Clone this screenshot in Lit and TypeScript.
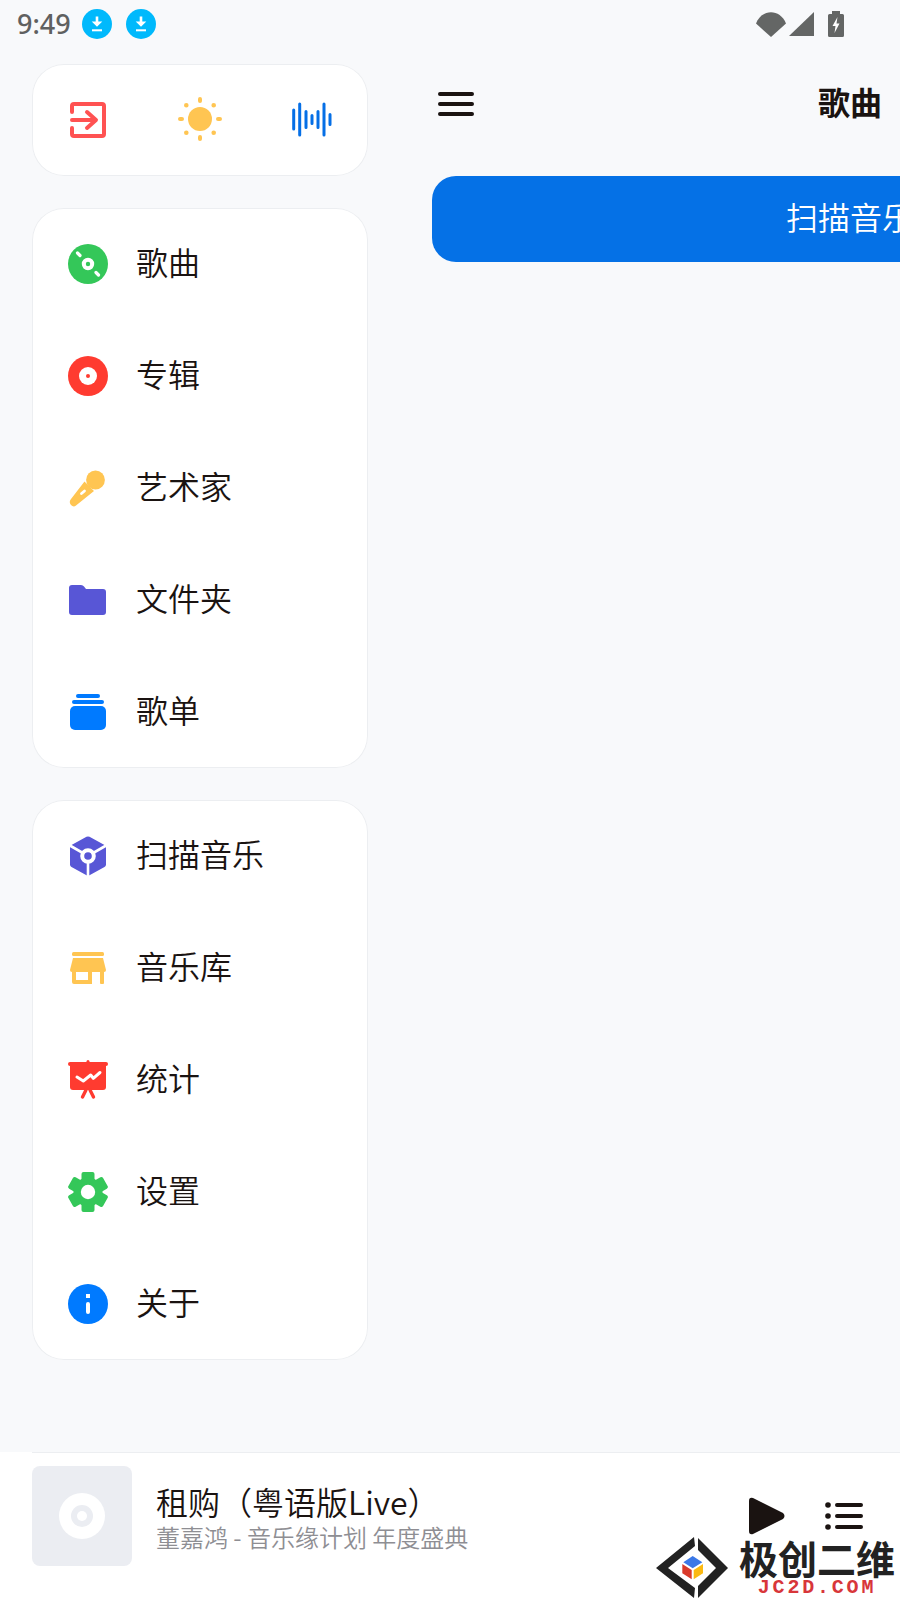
import { html, svg, css, LitElement } from "lit"
import { customElement } from "lit/decorators.js"

const GREEN = "#34c759"
const RED = "#ff3b30"
const YELLOW = "#ffc552"
const INDIGO = "#5856d6"
const BLUE = "#007aff"

const icon40 = (body) => html`<svg class="menu-icon" viewBox="0 0 40 40">${body}</svg>`

const topMenu = [
  {
    label: "歌曲",
    icon: icon40(svg`
      <circle cx="20" cy="20" r="20" fill=${GREEN} />
      <circle cx="20" cy="20" r="4.2" fill=${GREEN} stroke="#fff" stroke-width="4" />
      <path d="M9.5 9 L12 11.5 M28 28.5 L30.5 31" stroke="#fff" stroke-width="3.2" stroke-linecap="round" />
    `),
  },
  {
    label: "专辑",
    icon: icon40(svg`
      <circle cx="20" cy="20" r="20" fill=${RED} />
      <circle cx="20" cy="20" r="9" fill="#fff" />
      <circle cx="20" cy="20" r="2" fill=${RED} />
    `),
  },
  {
    label: "艺术家",
    icon: icon40(svg`
      <circle cx="27.5" cy="12" r="9.4" fill=${YELLOW} />
      <path d="M16.5 13.5 L26 23 L8 37.5 Q5.5 39.5 3 37 Q0.5 34 3 31 Z" fill=${YELLOW} />
      <path d="M13.5 25.5 L16.5 23" stroke="#fff" stroke-width="2.8" stroke-linecap="round" />
    `),
  },
  {
    label: "文件夹",
    icon: icon40(svg`
      <path d="M1 8 Q1 5 4 5 H13 Q15 5 16 6.5 L18 9 H35 Q38 9 38 12 V32 Q38 35 35 35 H4 Q1 35 1 32 Z" fill=${INDIGO} />
    `),
  },
  {
    label: "歌单",
    icon: icon40(svg`
      <rect x="8" y="2" width="24" height="4" rx="2" fill=${BLUE} />
      <rect x="4" y="8" width="32" height="4" rx="2" fill=${BLUE} />
      <rect x="2" y="14" width="36" height="24" rx="5" fill=${BLUE} />
    `),
  },
]

const toolMenu = [
  {
    label: "扫描音乐",
    icon: icon40(svg`
      <path d="M18.5 0.8 Q20 0 21.5 0.8 L36.5 9 Q38 9.8 38 11.5 V28.5 Q38 30.2 36.5 31 L21.5 39.2 Q20 40 18.5 39.2 L3.5 31 Q2 30.2 2 28.5 V11.5 Q2 9.8 3.5 9 Z" fill=${INDIGO} />
      <path d="M1 9 L20 20 L39 9 M20 20 V41" stroke="#fff" stroke-width="2.6" fill="none" />
      <circle cx="20" cy="20" r="5.8" fill=${INDIGO} stroke="#fff" stroke-width="4" />
    `),
  },
  {
    label: "音乐库",
    icon: icon40(svg`
      <rect x="4" y="4" width="32" height="4" rx="1.5" fill=${YELLOW} />
      <path d="M5 10 H35 L38 22 Q38 24 36 24 H4 Q2 24 2 22 Z" fill=${YELLOW} />
      <path fill-rule="evenodd" d="M4 23 H24 V36 H6 Q4 36 4 34 Z M8 24 V32 H20 V24 Z" fill=${YELLOW} />
      <path d="M32 23 H36 V35 Q36 36 35 36 H33 Q32 36 32 35 Z" fill=${YELLOW} />
    `),
  },
  {
    label: "统计",
    icon: icon40(svg`
      <rect x="18.5" y="0" width="3" height="4" rx="1.5" fill=${RED} />
      <rect x="0" y="2" width="40" height="4" rx="2" fill=${RED} />
      <path d="M2 4 H38 V27 Q38 30 35 30 H5 Q2 30 2 27 Z" fill=${RED} />
      <path d="M9 17 L15.3 21 L22.7 15 L25.3 18.3 L32 12.5" fill="none" stroke="#fff" stroke-width="3" stroke-linecap="round" stroke-linejoin="round" />
      <path d="M18 30 L14.5 37 M22 30 L25.5 37" stroke=${RED} stroke-width="3.4" stroke-linecap="round" />
    `),
  },
  {
    label: "设置",
    icon: icon40(svg`
      <g fill=${GREEN}>
        <rect x="13.5" y="0" width="13" height="40" rx="2" />
        <rect x="13.5" y="0" width="13" height="40" rx="2" transform="rotate(60 20 20)" />
        <rect x="13.5" y="0" width="13" height="40" rx="2" transform="rotate(120 20 20)" />
        <circle cx="20" cy="20" r="14.5" />
      </g>
      <circle cx="20" cy="20" r="7.2" fill="#fff" />
    `),
  },
  {
    label: "关于",
    icon: icon40(svg`
      <circle cx="20" cy="20" r="20" fill=${BLUE} />
      <rect x="18" y="10" width="4" height="4" fill="#fff" />
      <rect x="18" y="18" width="4" height="12" rx="2" fill="#fff" />
    `),
  },
]

const downloadBadge = html`
  <svg class="badge" viewBox="0 0 30 30">
    <circle cx="15" cy="15" r="15" fill="#00b9fc" />
    <path d="M13.7 7.5 H16.3 V12.5 H20.3 L15 17.8 L9.7 12.5 H13.7 Z" fill="#fff" />
    <rect x="10" y="20.3" width="10" height="2" fill="#fff" />
  </svg>
`

@customElement("app-root")
export default class AppRoot extends LitElement {
  static styles = css`
    :host {
      display: flex;
      flex-direction: column;
      position: relative;
      width: 900px;
      height: 1600px;
      overflow: hidden;
      background: #f8f9fb;
      font-family: "Noto Sans CJK SC", "Noto Sans", sans-serif;
      color: #1a1311;
    }

    .status {
      display: flex;
      align-items: center;
      height: 48px;
      padding: 0 56px 0 17px;
      color: #5f6060;
      flex-shrink: 0;
    }

    .time {
      font-family: "Noto Sans", sans-serif;
      font-size: 27px;
      font-weight: 500;
      line-height: 48px;
      width: 65px;
    }

    .badge {
      width: 30px;
      height: 30px;
      margin-right: 14px;
    }

    .status-right {
      display: flex;
      align-items: center;
      margin-left: auto;
    }

    .wifi {
      width: 30px;
      height: 25px;
      margin-right: 3px;
    }

    .cell {
      width: 25px;
      height: 24px;
      margin-right: 14px;
    }

    .battery {
      width: 16px;
      height: 26px;
    }

    .content {
      display: flex;
      flex: 1;
      min-height: 0;
    }

    .drawer {
      flex: 0 0 400px;
      box-sizing: border-box;
      padding: 16px 32px 0;
      display: flex;
      flex-direction: column;
      gap: 32px;
    }

    .card {
      background: #fff;
      box-shadow: inset 0 0 0 1px #eceef1;
      border-radius: 32px;
    }

    .quick {
      display: flex;
      align-items: center;
      justify-content: space-between;
      height: 112px;
      padding: 0 32px;
    }

    .quick svg {
      width: 48px;
      height: 48px;
    }

    .menu {
      height: 560px;
      display: flex;
      flex-direction: column;
    }

    .row {
      flex: 1;
      display: flex;
      align-items: center;
      padding-left: 36px;
      gap: 28px;
      font-size: 32px;
      font-weight: 350;
    }

    .row span {
      padding-bottom: 6px;
    }

    .menu-icon {
      width: 40px;
      height: 40px;
      flex-shrink: 0;
    }

    .page {
      flex: 0 0 900px;
      box-sizing: border-box;
      padding: 16px 32px 0;
    }

    .header {
      position: relative;
      display: flex;
      align-items: center;
      justify-content: center;
      height: 80px;
      margin-bottom: 32px;
    }

    .burger {
      position: absolute;
      left: 6px;
      top: 28px;
      width: 36px;
      height: 24px;
    }

    .title {
      font-size: 32px;
      font-weight: 700;
      padding-bottom: 6px;
    }

    .scan {
      display: flex;
      align-items: center;
      justify-content: center;
      height: 86px;
      box-sizing: border-box;
      padding-bottom: 6px;
      border-radius: 24px;
      background: #0571e6;
      color: #fff;
      font-size: 32px;
      font-weight: 350;
    }

    .player {
      flex: 0 0 148px;
      display: flex;
      background: #fff;
      padding-left: 32px;
      box-sizing: border-box;
    }

    .player-inner {
      flex: 1;
      display: flex;
      align-items: flex-start;
      border-top: 1px solid #eceef1;
      padding-top: 13px;
    }

    .cover {
      width: 100px;
      height: 100px;
      border-radius: 8px;
      background: #ebedf2;
      display: flex;
      align-items: center;
      justify-content: center;
      flex-shrink: 0;
    }

    .cover svg {
      width: 46px;
      height: 46px;
    }

    .meta {
      margin-left: 24px;
      display: flex;
      flex-direction: column;
      padding-top: 15px;
      font-weight: 350;
    }

    .song {
      font-size: 32px;
      line-height: 41px;
    }

    .artist {
      font-size: 24px;
      line-height: 30px;
      color: #8e8e93;
    }

    .controls {
      margin-left: auto;
      display: flex;
      align-items: center;
      gap: 39px;
      padding: 31px 37px 0 0;
    }

    .play {
      width: 38px;
      height: 38px;
    }

    .list {
      width: 38px;
      height: 30px;
    }

    .watermark {
      position: absolute;
      left: 654px;
      top: 1536px;
      display: flex;
      width: 246px;
      height: 64px;
    }

    .wm-logo {
      width: 76px;
      height: 64px;
      flex-shrink: 0;
    }

    .wm-text {
      margin-left: 9px;
      display: flex;
      flex-direction: column;
      align-items: center;
      width: 156px;
    }

    .wm-name {
      font-size: 39px;
      line-height: 42px;
      font-weight: 700;
      color: #222;
      white-space: nowrap;
    }

    .wm-url {
      font-family: "Liberation Mono", monospace;
      font-size: 20px;
      line-height: 20px;
      font-weight: 700;
      letter-spacing: 2.8px;
      color: #d8363a;
      white-space: nowrap;
    }
  `

  private renderRow(item) {
    return html`<div class="row">${item.icon}<span>${item.label}</span></div>`
  }

  protected render() {
    return html`
      <div class="status">
        <span class="time">9:49</span>
        ${downloadBadge}${downloadBadge}
        <div class="status-right">
          <svg class="wifi" viewBox="0 0 30 25"><path d="M0 11.5 C6 -3.5 24 -3.5 30 11.5 L15 25 Z" fill="#646665" /></svg>
          <svg class="cell" viewBox="0 0 25 24"><path d="M0 24 L25 0 V24 Z" fill="#646665" /></svg>
          <svg class="battery" viewBox="0 0 16 26">
            <path d="M4 0 H12 V3 H14.5 Q16 3 16 4.5 V24.5 Q16 26 14.5 26 H1.5 Q0 26 0 24.5 V4.5 Q0 3 1.5 3 H4 Z" fill="#646665" />
            <path d="M9.5 6 L4.5 15 H7.5 L6.5 22 L11.5 12.5 H8.5 Z" fill="#fff" />
          </svg>
        </div>
      </div>

      <div class="content">
        <div class="drawer">
          <div class="card quick">
            <svg viewBox="0 0 48 48">
              <path d="M8 16 V10 Q8 8 10 8 H38 Q40 8 40 10 V38 Q40 40 38 40 H10 Q8 40 8 38 V32" fill="none" stroke="#ff5252" stroke-width="4" stroke-linecap="round" />
              <path d="M8 24 H31 M23 16 L32 24 L23 32" fill="none" stroke="#ff5252" stroke-width="4" stroke-linecap="round" stroke-linejoin="round" />
            </svg>
            <svg viewBox="0 0 48 48">
              <circle cx="24" cy="23" r="12" fill=${YELLOW} />
              <path d="M24 3 V5 M24 41 V43 M4 23 H6 M42 23 H44" stroke=${YELLOW} stroke-width="4" stroke-linecap="round" />
              <path d="M10.3 9.3 h0.01 M37.7 9.3 h0.01 M10.3 36.7 h0.01 M37.7 36.7 h0.01" stroke=${YELLOW} stroke-width="4.6" stroke-linecap="round" />
            </svg>
            <svg viewBox="0 0 48 48">
              <path d="M5.7 14 V33 M11.7 8 V39 M18 15.5 V31.5 M24 19.5 V27.5 M30 15.5 V31.5 M36 8 V39 M42 18.5 V28.5" stroke="#056fe6" stroke-width="3" stroke-linecap="round" />
            </svg>
          </div>
          <div class="card menu">${topMenu.map((item) => this.renderRow(item))}</div>
          <div class="card menu">${toolMenu.map((item) => this.renderRow(item))}</div>
        </div>

        <div class="page">
          <div class="header">
            <svg class="burger" viewBox="0 0 36 24">
              <path d="M2 2 H34 M2 12 H34 M2 22 H34" stroke="#1a1311" stroke-width="4" stroke-linecap="round" />
            </svg>
            <span class="title">歌曲</span>
          </div>
          <div class="scan">扫描音乐</div>
        </div>
      </div>

      <div class="player">
        <div class="player-inner">
          <div class="cover">
            <svg viewBox="0 0 46 46">
              <circle cx="23" cy="23" r="23" fill="#fff" />
              <circle cx="23" cy="23" r="11" fill="#ebedf2" />
              <circle cx="23" cy="23" r="5" fill="#fff" />
            </svg>
          </div>
          <div class="meta">
            <span class="song">租购（粤语版Live）</span>
            <span class="artist">董嘉鸿 - 音乐缘计划 年度盛典</span>
          </div>
          <div class="controls">
            <svg class="play" viewBox="0 0 38 38">
              <path d="M1 4 Q1 0 5 1 L35 16 Q38 19 35 22 L5 37 Q1 38 1 34 Z" fill="#1a1311" />
            </svg>
            <svg class="list" viewBox="0 0 38 30">
              <circle cx="3" cy="4" r="2.8" fill="#1a1311" />
              <circle cx="3" cy="15" r="2.8" fill="#1a1311" />
              <circle cx="3" cy="26" r="2.8" fill="#1a1311" />
              <path d="M12 4 H36 M12 15 H36 M12 26 H36" stroke="#1a1311" stroke-width="4" stroke-linecap="round" />
            </svg>
          </div>
        </div>
      </div>

      <div class="watermark">
        <svg class="wm-logo" viewBox="0 0 76 64">
          <path d="M40 1 L2 32 L40 62 L41 52 L14 32 L41 10 Z" fill="#222" />
          <path d="M44 2 L74 32 L44 62 L44 50 L62 32 L44 14 Z" fill="#222" />
          <path d="M38.7 20 L48.3 26.3 L38.7 32.3 L29.3 26.3 Z" fill="#3b78e7" />
          <path d="M28.3 28 L37.7 34 V43.3 L28.3 37.3 Z" fill="#d93a2b" />
          <path d="M39.7 34 L49 28 V37.3 L39.7 43.3 Z" fill="#fbb912" />
        </svg>
        <div class="wm-text">
          <span class="wm-name">极创二维</span>
          <span class="wm-url">JC2D.COM</span>
        </div>
      </div>
    `
  }
}
